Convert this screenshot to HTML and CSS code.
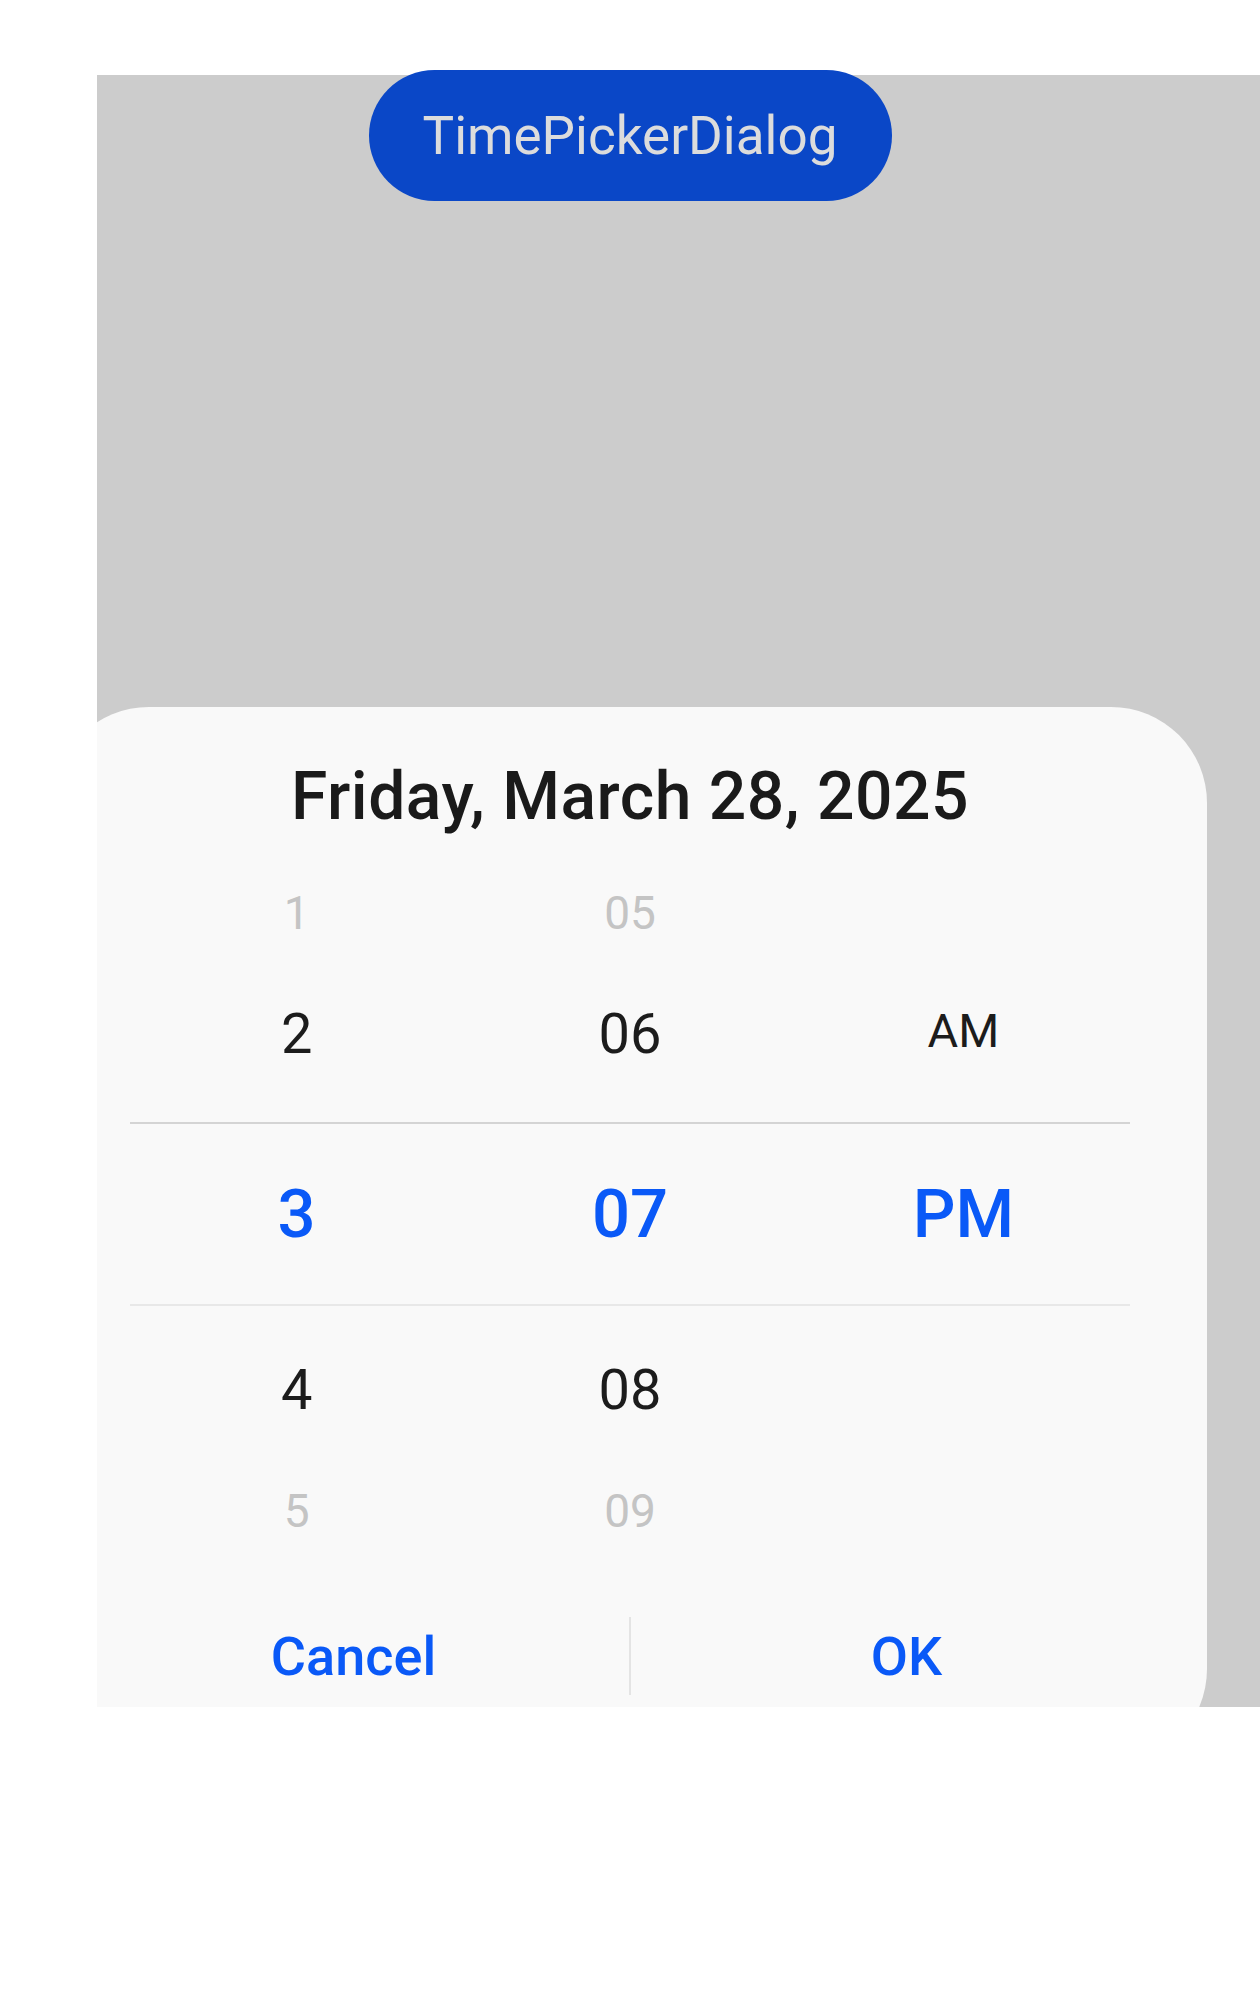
FILE: index.html
```html
<!DOCTYPE html>
<html lang="en">
<head>
<meta charset="utf-8">
<title>TimePickerDialog</title>
<link rel="stylesheet" href="styles.css">
</head>
<body>
<div class="frame">
  <div class="stage">
    <div class="trigger">TimePickerDialog</div>
    <div class="dialog">
      <div class="title">Friday, March 28, 2025</div>
      <div class="picker">
        <div class="row far"><span>1</span><span>05</span><span></span></div>
        <div class="row near"><span>2</span><span>06</span><span class="ampm">AM</span></div>
        <div class="row sel"><span>3</span><span>07</span><span>PM</span></div>
        <div class="row near below"><span>4</span><span>08</span><span></span></div>
        <div class="row far"><span>5</span><span>09</span><span></span></div>
      </div>
      <div class="actions">
        <div class="action">Cancel</div>
        <div class="divider"></div>
        <div class="action">OK</div>
      </div>
    </div>
  </div>
</div>
</body>
</html>
```

FILE: styles.css
```css
html, body {
  margin: 0;
  padding: 0;
  background: #ffffff;
}

body {
  font-family: Roboto, "Noto Sans", "Liberation Sans", sans-serif;
}

.frame {
  margin: 75px 0 0 97px;
  height: 1632px;
  background: #cccccc;
  clip-path: inset(-10px 0 0 0);
}

.stage {
  margin-left: -97px;
  width: 1260px;
  display: flex;
  flex-direction: column;
  align-items: center;
}

.trigger {
  margin-top: -5px;
  width: 523px;
  height: 131px;
  border-radius: 66px;
  background: #0a47c7;
  color: #dcdcdc;
  font-size: 53px;
  display: flex;
  align-items: center;
  justify-content: center;
}

.dialog {
  margin-top: 506px;
  width: 1154px;
  box-sizing: border-box;
  border-radius: 96px;
  background: #f9f9f9;
  padding: 40px 0 70px;
}

.title {
  height: 100px;
  line-height: 100px;
  text-align: center;
  font-size: 66px;
  font-weight: 500;
  letter-spacing: 0.5px;
  color: #1a1a1a;
  margin-bottom: 6px;
}

.picker {
  margin: 0 77px;
}

.row {
  display: grid;
  grid-template-columns: 1fr 1fr 1fr;
  text-align: center;
  height: 121px;
  line-height: 121px;
}

.row.far {
  font-size: 46px;
  color: #c4c4c4;
}

.row.near {
  font-size: 56px;
  color: #1c1c1c;
}

.row.near.below {
  margin-top: 24px;
}

.ampm {
  font-size: 47px;
  position: relative;
  top: -4px;
}

.row.sel {
  margin-top: 27px;
  height: 180px;
  line-height: 180px;
  font-size: 67px;
  font-weight: 500;
  color: #0a59f7;
  border-top: 2px solid #d4d4d4;
  border-bottom: 2px solid #e8e8e8;
}

.actions {
  margin: 45px 25px 0;
  height: 78px;
  display: flex;
  align-items: center;
}

.action {
  flex: 1;
  text-align: center;
  font-size: 54px;
  font-weight: 500;
  color: #0a59f7;
}

.divider {
  width: 2px;
  height: 78px;
  background: #e4e4e4;
}
```
